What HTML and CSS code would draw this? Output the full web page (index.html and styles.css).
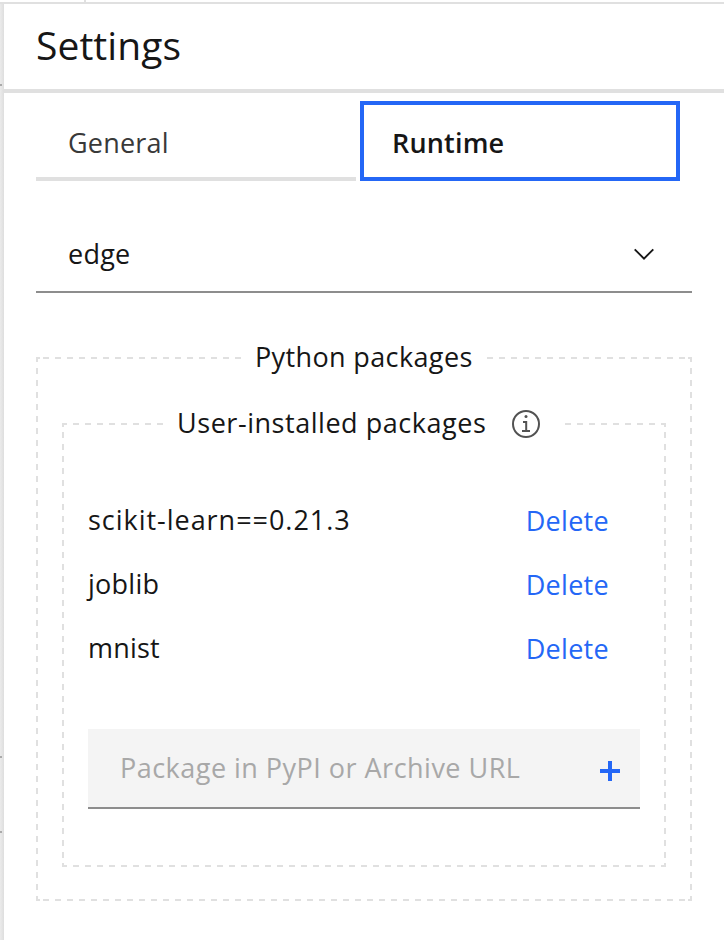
FILE: index.html
```html
<!DOCTYPE html>
<html lang="en">
<head>
<meta charset="utf-8">
<title>Settings</title>
<link rel="stylesheet" href="styles.css">
</head>
<body>
<div class="canvas-edge"><i class="tick tick-a"></i><i class="tick tick-b"></i><i class="tick tick-c"></i></div>
<div class="toolbar-edge"></div>
<main class="panel">
  <header class="panel-header"><h1>Settings</h1></header>
  <nav class="tabs">
    <a class="tab"><span class="t-general">General</span></a>
    <a class="tab tab-active"><span class="t-runtime">Runtime</span></a>
  </nav>
  <div class="select"><span class="t-edge">edge</span>
    <svg class="chevron" width="20" height="12" viewBox="0 0 20 12"><path d="M.7 1.3 10 10.6 19.3 1.3" fill="none" stroke="#161616" stroke-width="1.9"/></svg>
  </div>
  <section class="group outer">
    <svg class="frame" width="656" height="544"><path class="dash" d="M7 1H649M7 543H649M1 11V533M655 11V533"/><path d="M0 1H4M1 0V5M652 1H656M655 0V5M0 543H4M1 539V544M652 543H656M655 539V544"/></svg>
    <h2 class="legend"><span class="t-python">Python packages</span></h2>
    <section class="group inner">
      <svg class="frame" width="604" height="444"><path class="dash" d="M11 1H593M11 443H593M1 9V435M603 9V435"/><path d="M0 1H5M1 0V4M599 1H604M603 0V4M0 443H5M1 440V444M599 443H604M603 440V444"/></svg>
      <h3 class="legend"><span class="t-user">User-installed packages</span>
        <svg class="info" width="28" height="28" viewBox="0 0 28 28"><circle cx="14" cy="14" r="13" fill="none" stroke="#525252" stroke-width="2"/><circle cx="14" cy="6.6" r="1.5" fill="#525252"/><path d="M11 11.9H14.2V21M10 21H18" fill="none" stroke="#525252" stroke-width="2"/></svg>
      </h3>
      <ul class="packages">
        <li><span class="t-scikit">scikit-learn==0.21.3</span><a class="delete">Delete</a></li>
        <li><span class="t-joblib">joblib</span><a class="delete">Delete</a></li>
        <li><span class="t-mnist">mnist</span><a class="delete">Delete</a></li>
      </ul>
      <div class="field"><span class="t-place">Package in PyPI or Archive URL</span>
        <svg class="plus" width="20" height="20" viewBox="0 0 20 20"><path d="M10 0V20M0 10H20" stroke="#2467f6" stroke-width="4"/></svg>
      </div>
    </section>
  </section>
</main>
</body>
</html>
```
FILE: styles.css
```css
* { box-sizing: border-box; }
body {
  margin: 0;
  width: 724px;
  height: 940px;
  overflow: hidden;
  background: #fff;
  color: #161616;
  font: 400 27px/36px "Open Sans", sans-serif;
  display: grid;
  grid-template: 4px 936px / 4px 720px;
}
h1, h2, h3, ul { margin: 0; padding: 0; font-weight: 400; }
.toolbar-edge {
  grid-area: 1 / 1 / 2 / 3;
  border-bottom: 2px solid #e0e0e0;
  background: linear-gradient(#e0e0e0, #e0e0e0) 84px 0 / 2px 2px no-repeat;
}
.canvas-edge {
  grid-area: 2 / 1;
  position: relative;
  background: linear-gradient(90deg, #ebebeb, #dedede);
}
.tick { position: absolute; left: 0; width: 2px; height: 2px; background: #aaa; }
.tick-a { top: 80px; }
.tick-b { top: 752px; }
.tick-c { top: 827px; }
.panel { grid-area: 2 / 2; background: #fff; }
.panel-header {
  height: 89px;
  padding: 13px 32px 0;
  border-bottom: 4px solid #e0e0e0;
}
h1 { font-size: 39px; line-height: 56px; letter-spacing: 0.05px; }
.tabs { display: flex; gap: 4px; margin: 8px 0 0 32px; }
.tab {
  width: 320px;
  height: 80px;
  padding: 24px 32px 0;
  border-bottom: 4px solid #e0e0e0;
  color: #393939;
}
.tab-active {
  padding: 20px 28px 0;
  border: 4px solid #2467f6;
  color: #161616;
  font-weight: 600;
}
.t-general, .t-runtime, .t-mnist { letter-spacing: 0.18px; }
.t-edge, .t-joblib { letter-spacing: 0.25px; }
.t-python { letter-spacing: 0.37px; }
.t-user { letter-spacing: 0.54px; }
.t-scikit { letter-spacing: 0.97px; }
.t-place { letter-spacing: 0.48px; }
.select {
  display: flex;
  justify-content: space-between;
  align-items: center;
  width: 656px;
  height: 80px;
  margin: 32px 0 0 32px;
  padding: 3px 38px 0 32px;
  border-bottom: 2px solid #8d8d8d;
}
.group { position: relative; }
.frame { position: absolute; left: 0; top: 0; fill: none; stroke: #e0e0e0; stroke-width: 2; }
.dash { stroke-dasharray: 6 6; }
.outer { width: 656px; height: 544px; margin: 64px 0 0 32px; }
.inner { width: 604px; height: 444px; margin: 30px 0 0 26px; }
.legend {
  position: relative;
  display: flex;
  align-items: center;
  height: 36px;
  width: 246px;
  margin: 0 0 0 205px;
  padding-left: 14px;
  top: -18px;
  background: #fff;
  font-size: 27px;
  white-space: nowrap;
}
.inner > .legend { width: 402px; margin-left: 101px; justify-content: space-between; padding-right: 25px; }
.info { margin-top: 2px; }
.packages { list-style: none; margin: 43px 57px 0 26px; }
.packages li { display: flex; justify-content: space-between; height: 64px; }
.delete { padding-top: 1px; color: #2467f6; letter-spacing: 0.3px; }
.field {
  display: flex;
  align-items: center;
  justify-content: space-between;
  width: 552px;
  height: 80px;
  margin: 35px 0 0 26px;
  padding: 0 20px 0 32px;
  border-bottom: 2px solid #8d8d8d;
  background: #f4f4f4;
  color: #a8a8a8;
}
.plus { margin-top: 6px; }
```
